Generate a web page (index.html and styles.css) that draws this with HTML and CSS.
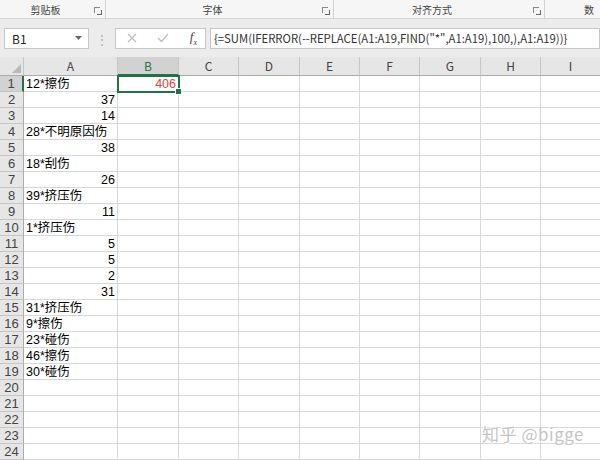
FILE: index.html
```html
<!DOCTYPE html>
<html lang="zh-CN">
<head>
    <meta charset="UTF-8">
    <title>Sheet1</title>
    <link rel="stylesheet" href="styles.css">
</head>
<body>
    <div class="ribbon">
        <div class="group g-clip"><span>剪贴板</span><i class="launcher"></i></div>
        <div class="group g-font"><span>字体</span><i class="launcher"></i></div>
        <div class="group g-align"><span>对齐方式</span><i class="launcher"></i></div>
        <div class="group g-num"><span>数</span></div>
    </div>

    <div class="formula-bar">
        <div class="name-box">
            <span>B1</span>
            <svg width="7" height="4" viewBox="0 0 7 4"><path d="M0 0h7L3.5 4z" fill="#666"/></svg>
        </div>
        <div class="grip">⋮</div>
        <div class="fx-box">
            <svg width="10" height="10" viewBox="0 0 10 10"><path d="M1 1l8 8M9 1l-8 8" stroke="#bdbdbd" stroke-width="1.2"/></svg>
            <svg width="12" height="10" viewBox="0 0 12 10"><path d="M1 5l3.5 3.5L11 1" stroke="#bdbdbd" stroke-width="1.2" fill="none"/></svg>
            <span class="fx"><i>f</i><sub>x</sub></span>
        </div>
        <div class="formula">{=SUM(IFERROR(--REPLACE(A1:A19,FIND("*",A1:A19),100,),A1:A19))}</div>
    </div>

    <div class="sheet" id="sheet"></div>

    <div class="watermark">知乎 @bigge</div>

    <script>
        const cols = ['A', 'B', 'C', 'D', 'E', 'F', 'G', 'H', 'I'];
        const colA = ['12*擦伤', 37, 14, '28*不明原因伤', 38, '18*刮伤', 26, '39*挤压伤', 11,
            '1*挤压伤', 5, 5, 2, 31, '31*挤压伤', '9*擦伤', '23*碰伤', '46*擦伤', '30*碰伤'];
        const sheet = document.getElementById('sheet');

        function cell(cls, text) {
            const d = document.createElement('div');
            d.className = cls;
            if (text !== undefined) d.textContent = text;
            sheet.appendChild(d);
            return d;
        }

        cell('corner');
        cols.forEach(c => cell(c === 'B' ? 'col-head active' : 'col-head', c));

        for (let r = 1; r <= 24; r++) {
            cell(r === 1 ? 'row-head active' : 'row-head', r);
            const v = colA[r - 1];
            cell(typeof v === 'number' ? 'cell num' : 'cell', v === undefined ? '' : v);
            if (r === 1) cell('cell num selected', 406);
            else cell('cell');
            for (let i = 2; i < cols.length; i++) cell('cell');
        }
    </script>
</body>
</html>
```

FILE: styles.css
```css
body {
    margin: 0;
    width: 600px;
    height: 460px;
    overflow: hidden;
    position: relative;
    background-color: #fff;
    font-family: "Noto Sans CJK SC", "Liberation Sans", sans-serif;
    color: #222;
}

/* ribbon group labels */
.ribbon {
    display: flex;
    height: 18px;
    background-color: #f6f6f6;
    border-bottom: 1px solid #d6d6d6;
    font-size: 10px;
    color: #444;
    overflow: hidden;
}

.group {
    position: relative;
    flex-shrink: 0;
    display: flex;
    align-items: center;
    justify-content: center;
    padding-right: 14px;
    border-right: 1px solid #d2d2d2;
    box-sizing: border-box;
}

.g-clip { width: 106px; }
.g-font { width: 228px; }
.g-align { width: 211px; }
.g-num { flex: 1; border-right: none; justify-content: flex-start; padding: 0 0 0 39px; }

.launcher {
    position: absolute;
    right: 5px;
    top: 7px;
    width: 5px;
    height: 5px;
    border-left: 1px solid #888;
    border-top: 1px solid #888;
}

.launcher::after {
    content: "";
    position: absolute;
    right: -2px;
    bottom: -2px;
    width: 4px;
    height: 4px;
    border-right: 1px solid #666;
    border-bottom: 1px solid #666;
}

/* formula bar */
.formula-bar {
    display: flex;
    align-items: center;
    height: 38px;
    padding-left: 4px;
    background-color: #ececec;
    box-sizing: border-box;
}

.name-box,
.fx-box,
.formula {
    height: 21px;
    background-color: #fff;
    border: 1px solid #c8c8c8;
    box-sizing: border-box;
    display: flex;
    align-items: center;
    font-size: 12px;
}

.name-box {
    width: 85px;
    padding: 0 6px 0 7px;
    justify-content: space-between;
}

.grip {
    width: 26px;
    text-align: center;
    color: #aaa;
    font-size: 12px;
}

.fx-box {
    width: 91px;
    padding: 0 8px 0 11px;
    justify-content: space-between;
}

.fx {
    font-family: "Liberation Serif", serif;
    font-size: 13px;
    color: #444;
}

.fx sub {
    font-size: 8px;
    font-style: italic;
}

.formula {
    flex: 1;
    margin-left: 4px;
    padding-left: 3px;
    white-space: nowrap;
    overflow: hidden;
    font-size: 11.3px;
    color: #333;
}

/* sheet grid */
.sheet {
    display: grid;
    grid-template-columns: 24px 94px 61px 60px 61px 60px 60px 61px 60px 60px;
    grid-template-rows: 19px repeat(24, 16px);
}

.corner,
.col-head,
.row-head {
    background-color: #e6e6e6;
    color: #444;
    box-sizing: border-box;
}

.corner {
    position: relative;
    border-right: 1px solid #c6c6c6;
    border-bottom: 1px solid #ababab;
}

.corner::after {
    content: "";
    position: absolute;
    right: 2px;
    bottom: 2px;
    border-left: 9px solid transparent;
    border-bottom: 9px solid #b9b9b9;
}

.col-head {
    border-right: 1px solid #c6c6c6;
    border-bottom: 1px solid #ababab;
    text-align: center;
    font-size: 12px;
    line-height: 18px;
}

.col-head.active {
    background-color: #d2d2d2;
    color: #217346;
    border-bottom: 2px solid #217346;
}

.row-head {
    border-right: 1px solid #ababab;
    border-bottom: 1px solid #c6c6c6;
    text-align: center;
    font-family: "Liberation Sans", sans-serif;
    font-size: 13px;
    line-height: 16px;
}

.row-head.active {
    background-color: #d2d2d2;
    border-right: 2px solid #217346;
}

.cell {
    border-right: 1px solid #d8d8d8;
    border-bottom: 1px solid #d8d8d8;
    box-sizing: border-box;
    padding: 0 2px;
    font-family: "Liberation Sans", "Noto Sans CJK SC", sans-serif;
    font-size: 12.5px;
    line-height: 16px;
    white-space: nowrap;
    color: #000;
}

.cell.num {
    text-align: right;
}

.cell.selected {
    position: relative;
    color: #e04444;
    outline: 2px solid #217346;
    outline-offset: -1px;
}

.cell.selected::after {
    content: "";
    position: absolute;
    right: -4px;
    bottom: -4px;
    width: 5px;
    height: 5px;
    background-color: #217346;
    border: 1px solid #fff;
}

.watermark {
    position: absolute;
    right: 16px;
    bottom: 14px;
    font-size: 17px;
    color: #c4c4c4;
    text-shadow: 1px 1px 0 #fff, -1px -1px 0 #fff;
    letter-spacing: 0.5px;
}
```
